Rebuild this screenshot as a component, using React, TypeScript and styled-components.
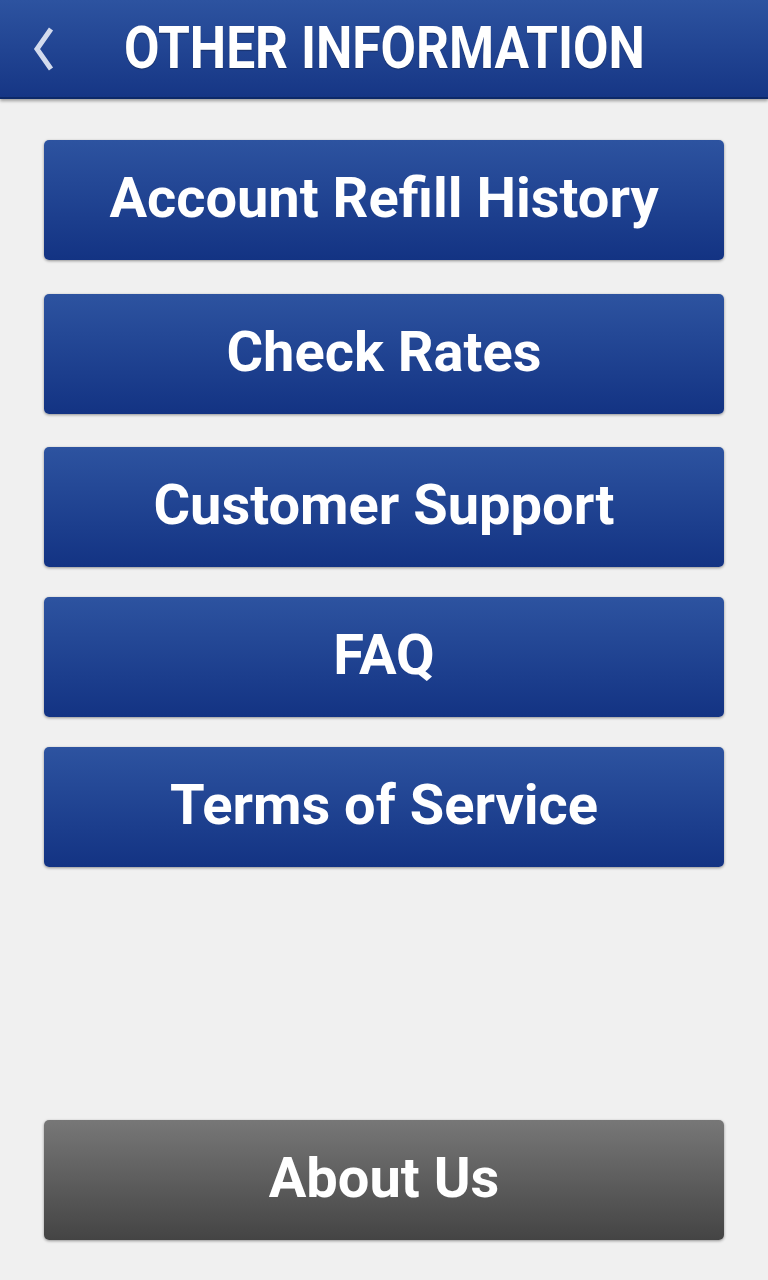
import React from "react";
import styled, { createGlobalStyle } from "styled-components";

const Global = createGlobalStyle`
  html, body { margin: 0; padding: 0; background: #f0f0f0; }
  body { font-family: Roboto, "Liberation Sans", sans-serif; }
`;

const Page = styled.div`
  width: 768px;
  height: 1280px;
  background: #f0f0f0;
  display: flex;
  flex-direction: column;
  overflow: hidden;
`;

const Header = styled.header`
  position: relative;
  height: 97px;
  flex: 0 0 auto;
  background: linear-gradient(to bottom, #2d53a0 0%, #163685 100%);
  border-bottom: 2px solid #0d2968;
  box-shadow: 0 2px 3px rgba(0, 0, 0, 0.35);
  display: flex;
  align-items: center;
  justify-content: center;
`;

const Back = styled.button`
  position: absolute;
  left: 27px;
  top: 26px;
  width: 32px;
  height: 46px;
  padding: 0;
  border: 0;
  background: none;
  display: flex;
  align-items: center;
  justify-content: center;
`;

const Title = styled.h1`
  margin: 0;
  color: #fff;
  font-family: Roboto, "Liberation Sans", sans-serif;
  font-weight: 700;
  font-size: 60px;
  line-height: 1;
  letter-spacing: 0;
  transform: scaleX(0.858);
  white-space: nowrap;
  margin-top: -2px;
  text-shadow: 0 1px 1px rgba(0, 0, 0, 0.3);
`;

const Body = styled.main`
  flex: 1;
  display: flex;
  flex-direction: column;
  padding: 41px 44px 40px 44px;
`;

const List = styled.div`
  display: flex;
  flex-direction: column;
`;

const Button = styled.button<{ $variant?: "blue" | "gray"; $space?: number }>`
  width: 680px;
  height: 120px;
  margin-top: ${(p) => p.$space ?? 0}px;
  border: 0;
  border-radius: 5px;
  background: ${(p) =>
    p.$variant === "gray"
      ? "linear-gradient(to bottom, #777777 0%, #444444 100%)"
      : "linear-gradient(to bottom, #2d53a0 0%, #133383 100%)"};
  box-shadow: 0 1px 3px rgba(0, 0, 0, 0.4);
  color: #fff;
  font-family: Roboto, "Liberation Sans", sans-serif;
  font-weight: 700;
  font-size: 56px;
  line-height: 1;
  display: flex;
  align-items: center;
  justify-content: center;
  padding: 0 0 4px 0;
  cursor: pointer;
`;

const Spacer = styled.div`
  flex: 1;
`;

const items: { label: string; space: number }[] = [
  { label: "Account Refill History", space: 0 },
  { label: "Check Rates", space: 34 },
  { label: "Customer Support", space: 33 },
  { label: "FAQ", space: 30 },
  { label: "Terms of Service", space: 30 },
];

export default function App() {
  return (
    <Page>
      <Global />
      <Header>
        <Back aria-label="Back">
          <svg width="26" height="46" viewBox="0 0 26 46">
            <path
              d="M21 3 L7 23 L21 43"
              fill="none"
              stroke="#d3dbed"
              strokeWidth="5"
            />
          </svg>
        </Back>
        <Title>OTHER INFORMATION</Title>
      </Header>
      <Body>
        <List>
          {items.map((it) => (
            <Button key={it.label} $space={it.space}>
              {it.label}
            </Button>
          ))}
        </List>
        <Spacer />
        <Button $variant="gray">About Us</Button>
      </Body>
    </Page>
  );
}
